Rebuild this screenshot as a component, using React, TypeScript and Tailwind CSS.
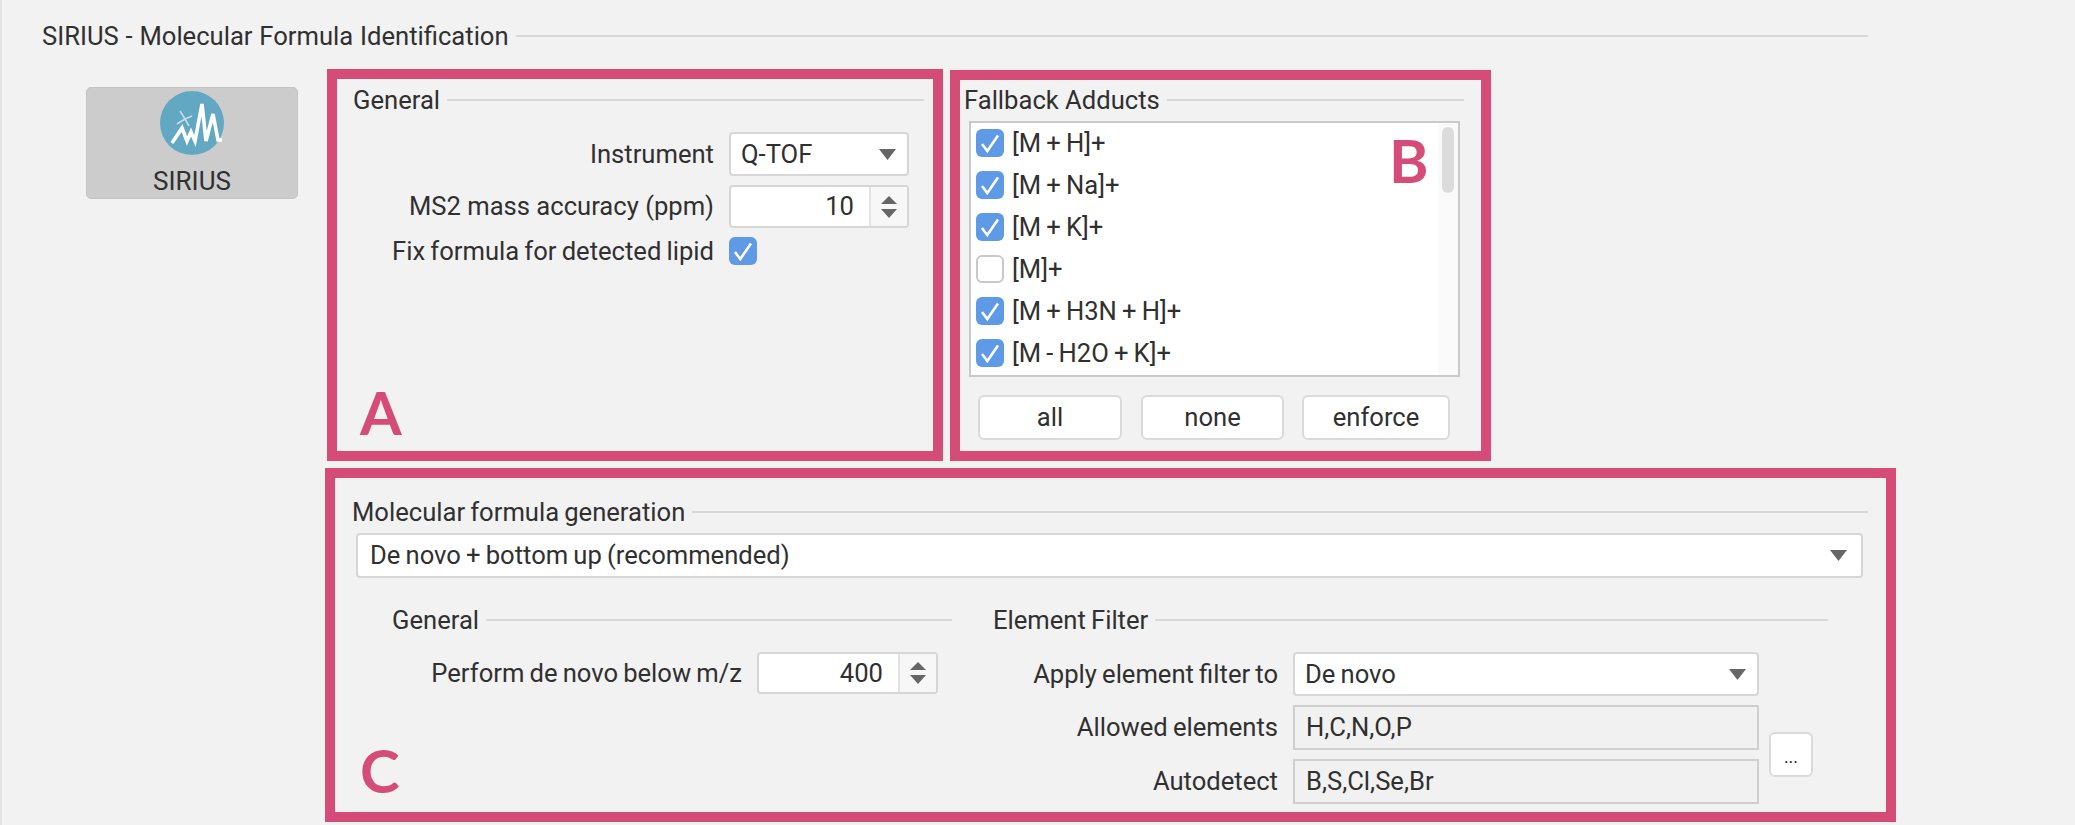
import React from 'react';

const adducts = [
  { label: '[M + H]+', checked: true },
  { label: '[M + Na]+', checked: true },
  { label: '[M + K]+', checked: true },
  { label: '[M]+', checked: false },
  { label: '[M + H3N + H]+', checked: true },
  { label: '[M - H2O + K]+', checked: true },
];

const Heading: React.FC<{ title: string; className?: string }> = ({ title, className }) => (
  <div className={`flex h-7 items-center gap-[7px] ${className ?? ''}`}>
    <span className="whitespace-nowrap">{title}</span>
    <div className="h-[2px] flex-1 bg-[#d8d8d8]" />
  </div>
);

const Checkbox: React.FC<{ checked: boolean }> = ({ checked }) =>
  checked ? (
    <div className="h-7 w-7 shrink-0 rounded-[6px] bg-[#5f9ae6]">
      <svg width="28" height="28" viewBox="0 0 28 28" fill="none">
        <path d="M6 15L11.3 22L22 6.5" stroke="#ffffff" strokeWidth="2.6" />
      </svg>
    </div>
  ) : (
    <div className="h-7 w-7 shrink-0 rounded-[6px] border-2 border-[#c8c8c8] bg-white" />
  );

const ComboBox: React.FC<{ value: string; className?: string }> = ({ value, className }) => (
  <div className={`flex items-center justify-between rounded-[4px] border-2 border-[#d6d6d6] bg-white pl-[10px] pr-[11px] ${className ?? ''}`}>
    <span>{value}</span>
    <svg width="17" height="11" viewBox="0 0 17 11">
      <path d="M0 0H17L8.5 11Z" fill="#666666" />
    </svg>
  </div>
);

const SpinBox: React.FC<{ value: string; className?: string }> = ({ value, className }) => (
  <div className={`flex rounded-[4px] border-2 border-[#d6d6d6] bg-white ${className ?? ''}`}>
    <div className="flex flex-1 items-center justify-end pr-[15px]">{value}</div>
    <div className="flex w-[38px] flex-col items-center justify-center gap-[5px] border-l-2 border-[#e2e2e2] bg-[#f7f7f7]">
      <svg width="16" height="8" viewBox="0 0 16 8">
        <path d="M8 0L16 8H0Z" fill="#666666" />
      </svg>
      <svg width="16" height="9" viewBox="0 0 16 9">
        <path d="M0 0H16L8 9Z" fill="#666666" />
      </svg>
    </div>
  </div>
);

const ReadOnlyField: React.FC<{ value: string }> = ({ value }) => (
  <div className="flex h-[45px] items-center border-2 border-[#cfcfcf] bg-[#f1f1f1] pl-[11px]">{value}</div>
);

const PushButton: React.FC<{ label: string; className?: string }> = ({ label, className }) => (
  <button className={`h-[45px] rounded-[6px] border-2 border-[#dadada] bg-white ${className ?? ''}`}>{label}</button>
);

const SiriusLogo = () => (
  <svg width="64" height="64" viewBox="0 0 64 64" fill="none">
    <circle cx="32" cy="32" r="32" fill="#63a8c3" />
    <path
      d="M12 52L22 37L27 50L31 41L35 50L42 13L46 50L53 23L58 49H62"
      stroke="#ffffff"
      strokeWidth="3.6"
    />
    <path d="M20 20L25 28L32 25M25 28L17 33M25 28L29 35" stroke="#c3dde8" strokeWidth="1.6" />
  </svg>
);

const BoxLetter: React.FC<{ letter: string; className: string }> = ({ letter, className }) => (
  <span className={`absolute font-['Lato',sans-serif] text-[60px] font-bold leading-none text-[#d64c78] ${className}`}>
    {letter}
  </span>
);

export default function App() {
  return (
    <div className="h-[825px] w-[2075px] overflow-hidden border-l-2 border-[#e4e4e4] bg-[#f2f2f2] pt-[22px] font-['Roboto',sans-serif] text-[25.6px] text-[#303030] [word-spacing:-1.2px]">
      <Heading title="SIRIUS - Molecular Formula Identification" className="ml-[40px] mr-[207px] [word-spacing:0.5px]" />

      <div className="mt-[19px] flex">
        {/* Tool list */}
        <div className="w-[323px] shrink-0 pl-[84px]">
          <div className="mt-[18px] flex h-[112px] w-[212px] flex-col items-center rounded-[5px] border border-[#c4c4c4] bg-[#cccccc] pt-[3px]">
            <SiriusLogo />
            <span className="mt-[12px] text-[26px] leading-7">SIRIUS</span>
          </div>
        </div>

        <div className="flex flex-col">
          <div className="ml-[2px] flex gap-[7px]">
            {/* A */}
            <div className="relative h-[392px] w-[616px] border-[10px] border-[#d64c78] pl-[16px] pr-[9px] pt-[7px]">
              <Heading title="General" />
              <div className="mr-[15px] mt-[18px] flex flex-col gap-[9px]">
                <div className="flex items-center justify-end gap-[15px]">
                  <span>Instrument</span>
                  <ComboBox value="Q-TOF" className="h-11 w-[180px]" />
                </div>
                <div className="flex items-center justify-end gap-[15px]">
                  <span className="[word-spacing:0]">MS2 mass accuracy (ppm)</span>
                  <SpinBox value="10" className="h-[43px] w-[180px]" />
                </div>
                <div className="flex h-7 items-center justify-end gap-[15px]">
                  <span>Fix formula for detected lipid</span>
                  <div className="w-[180px]">
                    <Checkbox checked />
                  </div>
                </div>
              </div>
              <BoxLetter letter="A" className="bottom-[9px] left-[23px]" />
            </div>

            {/* B */}
            <div className="relative mt-px h-[391px] w-[541px] border-[10px] border-[#d64c78] pl-[4px] pr-[17px] pt-[6px]">
              <Heading title="Fallback Adducts" className="[word-spacing:0]" />
              <div className="ml-[5px] mt-[7px] flex h-[256px] w-[491px] border-2 border-[#c9c9c9] bg-white">
                <div className="flex flex-1 flex-col gap-[14px] pl-[5px] pt-[6px]">
                  {adducts.map((adduct) => (
                    <div key={adduct.label} className="flex h-7 items-center gap-[8px]">
                      <Checkbox checked={adduct.checked} />
                      <span>{adduct.label}</span>
                    </div>
                  ))}
                </div>
                <div className="w-5 bg-[#fafafa] pl-1 pt-1">
                  <div className="h-[66px] w-3 rounded-full bg-[#dcdcdc]" />
                </div>
              </div>
              <div className="ml-[14px] mt-[18px] flex">
                <PushButton label="all" className="w-[144px]" />
                <PushButton label="none" className="ml-[19px] w-[143px]" />
                <PushButton label="enforce" className="ml-[18px] w-[148px]" />
              </div>
              <BoxLetter letter="B" className="left-[429px] top-[50px]" />
            </div>
          </div>

          {/* C */}
          <div className="relative mt-[7px] h-[354px] w-[1571px] border-[10px] border-[#d64c78] pl-[17px] pr-[18px] pt-[20px]">
            <Heading title="Molecular formula generation" />
            <ComboBox value="De novo + bottom up (recommended)" className="ml-[4px] mt-[7px] h-[45px] w-[1507px] pl-[12px] pr-[14px]" />
            <div className="ml-[40px] mt-7 flex gap-[41px]">
              <div className="w-[560px]">
                <Heading title="General" />
                <div className="mr-[14px] mt-[18px] flex items-center justify-end gap-[15px]">
                  <span>Perform de novo below m/z</span>
                  <SpinBox value="400" className="h-[42px] w-[181px]" />
                </div>
              </div>
              <div className="w-[835px]">
                <Heading title="Element Filter" />
                <div className="mt-[18px] grid grid-cols-[290px_466px_44px] grid-rows-[44px_45px_45px] items-center gap-x-[10px] gap-y-[9px]">
                  <span className="pr-[5px] text-right">Apply element filter to</span>
                  <ComboBox value="De novo" className="col-span-2 h-11 w-[466px]" />
                  <span className="pr-[5px] text-right">Allowed elements</span>
                  <ReadOnlyField value="H,C,N,O,P" />
                  <PushButton label="..." className="row-span-2 pt-1 text-[18px]" />
                  <span className="pr-[5px] text-right">Autodetect</span>
                  <ReadOnlyField value="B,S,Cl,Se,Br" />
                </div>
              </div>
            </div>
            <BoxLetter letter="C" className="bottom-[12px] left-[25px]" />
          </div>
        </div>
      </div>
    </div>
  );
}
